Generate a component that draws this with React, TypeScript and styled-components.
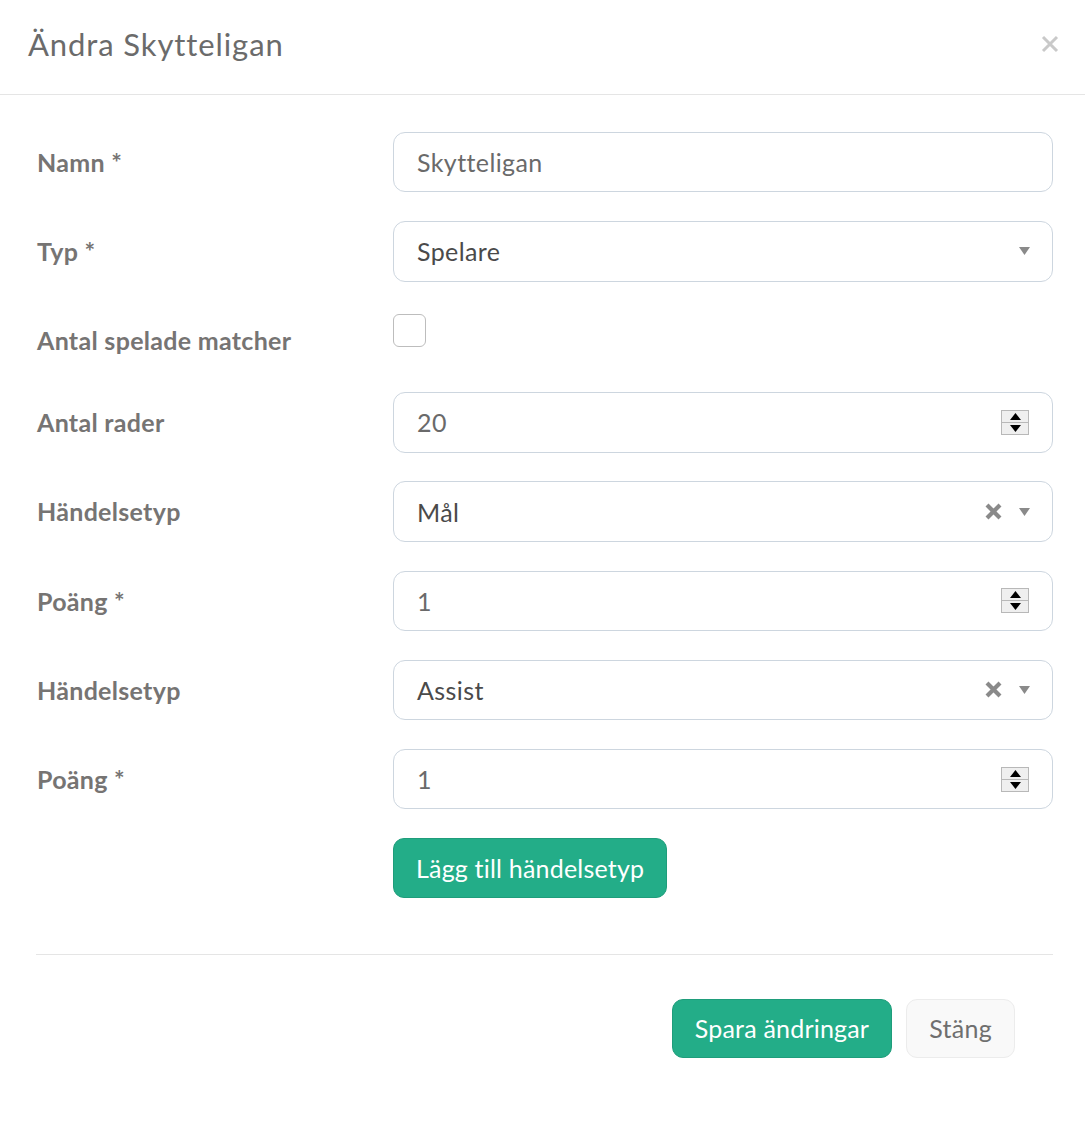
import React from "react";
import styled, { createGlobalStyle } from "styled-components";

const GlobalStyle = createGlobalStyle`
  html, body {
    margin: 0;
    padding: 0;
    background: #ffffff;
    font-family: Lato, "Open Sans", "Liberation Sans", sans-serif;
  }
  * { box-sizing: border-box; }
`;

const Modal = styled.div`
  width: 1085px;
  min-height: 1129px;
  background: #fff;
`;

const Header = styled.div`
  height: 95px;
  border-bottom: 1px solid #e5e5e5;
  display: flex;
  align-items: center;
  justify-content: space-between;
  padding: 0 26px 6px 28px;
`;

const Title = styled.h4`
  margin: 0;
  font-size: 31px;
  font-weight: 400;
  letter-spacing: 0.9px;
  color: #6b6b6b;
  line-height: 45px;
`;

const CloseButton = styled.button`
  border: 0;
  background: transparent;
  padding: 0;
  width: 18px;
  height: 18px;
  display: flex;
  cursor: pointer;
`;

const Body = styled.div`
  padding: 37px 32px 0 36px;
`;

const Form = styled.div`
  display: flex;
  flex-direction: column;
  gap: 28.8px;
`;

const Row = styled.div<{ $h?: number }>`
  display: grid;
  grid-template-columns: 357px 1fr;
  align-items: start;
  ${(p) => (p.$h ? `height: ${p.$h}px;` : "")}
`;

const Label = styled.label`
  font-size: 25px;
  font-weight: 700;
  letter-spacing: 0.3px;
  color: #767473;
  line-height: 36px;
  padding-top: 12px;
  padding-left: 1px;
`;

const Field = styled.div<{ $strong?: boolean }>`
  height: 60.4px;
  border: 1px solid #cdd6df;
  border-radius: 12px;
  display: flex;
  align-items: center;
  padding: 0 22px 0 23px;
  font-size: 25px;
  letter-spacing: 0.4px;
  color: ${(p) => (p.$strong ? "#4a4a4a" : "#6a6a6a")};
  background: #fff;
`;

const Value = styled.span`
  flex: 1;
`;

const Checkbox = styled.div`
  width: 33px;
  height: 33px;
  margin-top: 4px;
  border: 1px solid #bdbdbd;
  border-radius: 6px;
  background: #fff;
`;

const Spinner = styled.div`
  width: 28px;
  height: 25px;
  border: 1px solid #b8b8b8;
  background: #efefef;
  display: flex;
  flex-direction: column;
  margin-right: 1px;
`;

const SpinHalf = styled.div<{ $top?: boolean }>`
  flex: 1;
  display: flex;
  align-items: center;
  justify-content: center;
  ${(p) => (p.$top ? "border-bottom: 1px solid #b8b8b8;" : "")}
`;

const Icons = styled.div`
  display: flex;
  align-items: center;
  gap: 17px;
`;

const PrimaryButton = styled.button`
  height: 59.5px;
  padding: 0 22px;
  border: 1px solid #1f9d7b;
  border-radius: 11px;
  background: #23ad88;
  color: #fff;
  font-family: inherit;
  font-size: 25px;
  letter-spacing: 0.2px;
  cursor: pointer;
`;

const DefaultButton = styled.button`
  height: 59.5px;
  padding: 0 22px;
  border: 1px solid #ececec;
  border-radius: 11px;
  background: #f9f9f9;
  color: #6f6f6f;
  font-family: inherit;
  font-size: 25px;
  letter-spacing: 0.3px;
  cursor: pointer;
`;

const ButtonRow = styled.div`
  display: flex;
`;

const Divider = styled.hr`
  margin: 56px 0 0 0;
  border: 0;
  border-top: 1px solid #e5e5e5;
`;

const Footer = styled.div`
  display: flex;
  justify-content: flex-end;
  gap: 14px;
  padding: 44px 38px 0 0;
`;

const Triangle = ({ up }: { up?: boolean }) => (
  <svg width="11" height="7" viewBox="0 0 11 7">
    <path d={up ? "M5.5 0 L11 7 L0 7 Z" : "M0 0 L11 0 L5.5 7 Z"} fill="#000" />
  </svg>
);

const NumberSpinner = () => (
  <Spinner>
    <SpinHalf $top>
      <Triangle up />
    </SpinHalf>
    <SpinHalf>
      <Triangle />
    </SpinHalf>
  </Spinner>
);

const Caret = () => (
  <svg width="11" height="8" viewBox="0 0 11 8">
    <path d="M0 0 L11 0 L5.5 8 Z" fill="#8a8a8a" />
  </svg>
);

const ClearX = () => (
  <svg width="17" height="17" viewBox="0 0 17 17">
    <path d="M2 2 L15 15 M15 2 L2 15" stroke="#8a8a8a" strokeWidth="4.2" strokeLinecap="butt" />
  </svg>
);

const TextRow = ({ label, value }: { label: string; value: string }) => (
  <Row>
    <Label>{label}</Label>
    <Field>
      <Value>{value}</Value>
    </Field>
  </Row>
);

const NumberRow = ({ label, value }: { label: string; value: string }) => (
  <Row>
    <Label>{label}</Label>
    <Field>
      <Value>{value}</Value>
      <NumberSpinner />
    </Field>
  </Row>
);

const SelectRow = ({ label, value, clearable }: { label: string; value: string; clearable?: boolean }) => (
  <Row>
    <Label>{label}</Label>
    <Field $strong>
      <Value>{value}</Value>
      <Icons>
        {clearable && <ClearX />}
        <Caret />
      </Icons>
    </Field>
  </Row>
);

export default function App() {
  return (
    <>
      <GlobalStyle />
      <Modal>
        <Header>
          <Title>Ändra Skytteligan</Title>
          <CloseButton aria-label="Stäng">
            <svg width="18" height="18" viewBox="0 0 18 18">
              <path d="M2 2 L16 16 M16 2 L2 16" stroke="#c9c9c9" strokeWidth="3" />
            </svg>
          </CloseButton>
        </Header>
        <Body>
          <Form>
            <TextRow label="Namn *" value="Skytteligan" />
            <SelectRow label="Typ *" value="Spelare" />
            <Row $h={53}>
              <Label>Antal spelade matcher</Label>
              <Checkbox />
            </Row>
            <NumberRow label="Antal rader" value="20" />
            <SelectRow label="Händelsetyp" value="Mål" clearable />
            <NumberRow label="Poäng *" value="1" />
            <SelectRow label="Händelsetyp" value="Assist" clearable />
            <NumberRow label="Poäng *" value="1" />
            <Row>
              <div />
              <ButtonRow>
                <PrimaryButton>Lägg till händelsetyp</PrimaryButton>
              </ButtonRow>
            </Row>
          </Form>
          <Divider />
          <Footer>
            <PrimaryButton>Spara ändringar</PrimaryButton>
            <DefaultButton>Stäng</DefaultButton>
          </Footer>
        </Body>
      </Modal>
    </>
  );
}
